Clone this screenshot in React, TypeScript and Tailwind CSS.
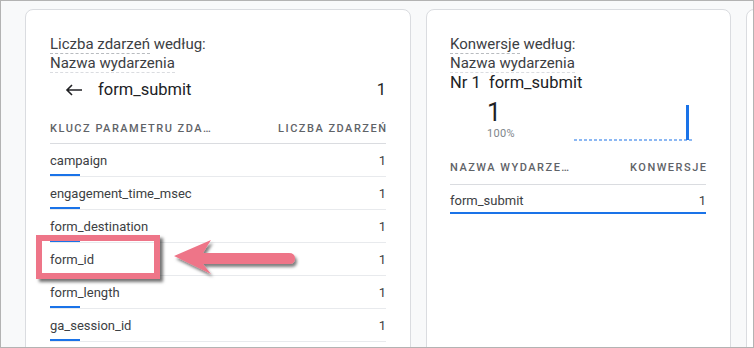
import React from "react";

const rows = [
  "campaign",
  "engagement_time_msec",
  "form_destination",
  "form_id",
  "form_length",
  "ga_session_id",
];

export default function App() {
  return (
    <div
      className="relative w-[754px] h-[348px] overflow-hidden bg-[#f8f9fa] border border-[#b3b3b3]"
      style={{ fontFamily: "Roboto, 'Noto Sans', sans-serif" }}
    >
      <div className="flex gap-[15px] pl-[24px] pt-[8px]">
        {/* Left card */}
        <div className="w-[386px] h-[400px] shrink-0 rounded-[8px] border border-[#dadce0] bg-white px-[24px] pt-[25px]">
          <div className="h-[19px] leading-[18px] text-[15px] text-[#3c4043] whitespace-nowrap">
            <span className="inline-block border-b border-dashed border-[#b8bbbf] leading-[18px]">Liczba zdarzeń</span>
            <span> według:</span>
          </div>
          <div className="h-[19px] leading-[18px] text-[15px] text-[#3c4043] whitespace-nowrap">
            <span className="inline-block border-b border-dashed border-[#dadce0] leading-[18px]">Nazwa wydarzenia</span>
          </div>
          <div className="mt-[5px] h-[24px] flex items-center text-[16.5px] text-[#202124]">
            <svg width="18" height="12" viewBox="0 0 18 12" className="ml-[15px] mr-[15px]">
              <path d="M17 6H2M7 1L2 6l5 5" stroke="#202124" strokeWidth="1.6" fill="none" />
            </svg>
            <span className="flex-1">form_submit</span>
            <span>1</span>
          </div>
          <div className="pt-[19px] pb-[6px] leading-[16px] flex justify-between text-[11px] font-medium tracking-[1.5px] text-[#5f6368] border-b border-[#dadce0]">
            <span>KLUCZ PARAMETRU ZDA…</span>
            <span className="mr-[-1.5px]">LICZBA ZDARZEŃ</span>
          </div>
          {rows.map((r) => (
            <div key={r} className="border-b border-[#e8eaed]">
              <div className="flex justify-between pt-[9px] pb-[5px] leading-[16px] text-[13px] text-[#3c4043]">
                <span>{r}</span>
                <span>1</span>
              </div>
              <div className="w-[30px] h-[2px] bg-[#1a73e8]" />
            </div>
          ))}
        </div>

        {/* Right card */}
        <div className="w-[305px] h-[400px] shrink-0 rounded-[8px] border border-[#dadce0] bg-white pl-[23px] pr-[24px] pt-[25px]">
          <div className="h-[19px] leading-[18px] text-[15px] text-[#3c4043] whitespace-nowrap">
            <span className="inline-block border-b border-dashed border-[#b8bbbf] leading-[18px]">Konwersje</span>
            <span> według:</span>
          </div>
          <div className="h-[19px] leading-[18px] text-[15px] text-[#3c4043] whitespace-nowrap">
            <span className="inline-block border-b border-dashed border-[#dadce0] leading-[18px]">Nazwa wydarzenia</span>
          </div>
          <div className="h-[20px] leading-[20px] text-[16.5px] text-[#202124] whitespace-nowrap">
            Nr 1&nbsp; form_submit
          </div>
          <div className="flex mt-[4px]">
            <div className="w-[124px] pl-[37px]">
              <div className="text-[25px] leading-[28px] text-[#202124] pt-[2px]">1</div>
              <div className="text-[11px] leading-[14px] text-[#80868b] tracking-[0.3px]">100%</div>
            </div>
            <svg width="120" height="44" viewBox="0 0 120 44">
              <line x1="0" y1="43" x2="120" y2="43" stroke="#1a73e8" strokeWidth="1.2" strokeDasharray="3 2" />
              <rect x="112" y="8" width="3" height="35" fill="#1a73e8" />
            </svg>
          </div>
          <div className="pt-[19px] pb-[8px] leading-[16px] flex justify-between text-[11px] font-medium tracking-[1.5px] text-[#5f6368] border-b border-[#dadce0]">
            <span>NAZWA WYDARZE…</span>
            <span className="mr-[-1.5px]">KONWERSJE</span>
          </div>
          <div className="flex justify-between pt-[8px] pb-[3px] leading-[16px] text-[13px] text-[#3c4043]">
            <span>form_submit</span>
            <span>1</span>
          </div>
          <div className="h-[2px] bg-[#1a73e8]" />
        </div>

        {/* Third card edge */}
        <div className="w-[100px] h-[400px] shrink-0 rounded-[8px] border border-[#dadce0] bg-white" />
      </div>

      {/* Highlight annotation */}
      <div className="absolute left-[35px] top-[234px] w-[124px] h-[44px] border-[6px] border-[#ee7588] shadow-[3px_3px_3px_rgba(0,0,0,0.55)]" />
      <svg
        className="absolute left-[168px] top-[234px]"
        width="135"
        height="48"
        viewBox="0 0 135 48"
      >
        <defs>
          <filter id="sh" x="-10%" y="-20%" width="130%" height="160%">
            <feDropShadow dx="2" dy="3" stdDeviation="1.5" floodColor="#000" floodOpacity="0.5" />
          </filter>
        </defs>
        <path
          d="M5 21 L42 5 L34 18 L120 18 Q126 18 126 23.5 Q126 29 120 29 L34 29 L42 39 Z"
          fill="#ee7588"
          filter="url(#sh)"
        />
      </svg>
    </div>
  );
}
